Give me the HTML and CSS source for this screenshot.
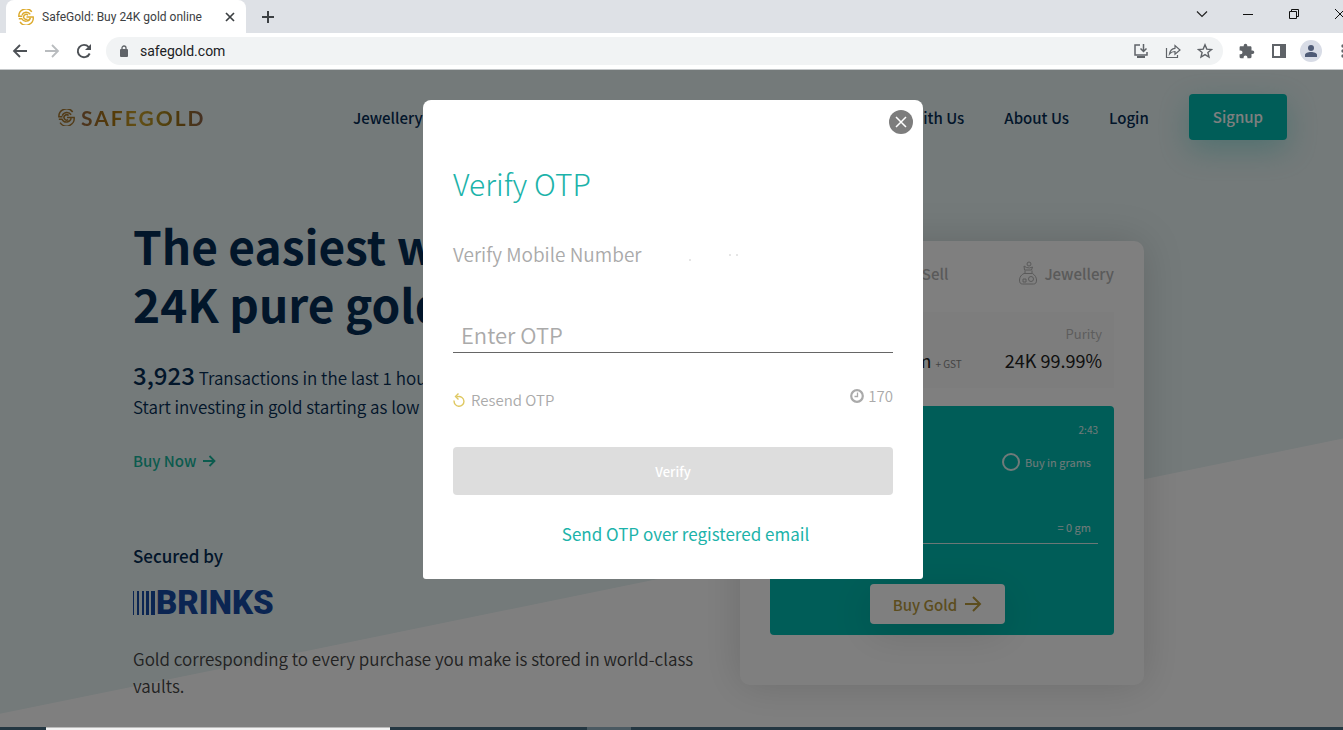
FILE: index.html
```html
<!DOCTYPE html>
<html lang="en">
<head>
  <meta charset="UTF-8">
  <meta name="viewport" content="width=device-width, initial-scale=1.0">
  <title>SafeGold: Buy 24K gold online</title>
  <link rel="stylesheet" href="styles.css">
</head>
<body>
  <!-- shared SafeGold mark -->
  <svg class="defs" width="0" height="0" aria-hidden="true">
    <symbol id="mark" viewBox="0 0 16 16">
      <g fill="none" stroke="currentColor" stroke-width="1.400">
        <path d="M13.800 2.800A7.200 7.200 0 0 0 .8 7.200h3.400"/>
        <path d="M2 12.800A7.200 7.200 0 0 0 15.200 8H8.500"/>
        <path d="M12.300 5.400A4.600 4.600 0 0 0 4 6.400"/>
        <path d="M.8 9.700h3A4.600 4.600 0 0 0 12.400 8.500"/>
        <path d="M10 6.200A2.500 2.500 0 1 0 9.500 10"/>
      </g>
    </symbol>
  </svg>

  <div class="window">
    <div class="tab-strip">
      <div class="tab">
        <svg class="tab-icon" width="16" height="16"><use href="#mark"/></svg>
        <span class="tab-title">SafeGold: Buy 24K gold online</span>
        <button class="icon-btn" aria-label="Close tab">
          <svg width="10" height="10" viewBox="0 0 10 10"><path d="M1 1l8 8M9 1L1 9" stroke="#3c4043" stroke-width="1.700"/></svg>
        </button>
      </div>
      <button class="icon-btn new-tab" aria-label="New tab">
        <svg width="12" height="12" viewBox="0 0 12 12"><path d="M6 0v12M0 6h12" stroke="#3c4043" stroke-width="2"/></svg>
      </button>
      <div class="window-buttons">
        <button class="icon-btn" aria-label="Search tabs">
          <svg width="12" height="12" viewBox="0 0 12 12"><path d="M1 3.500l5 5 5-5" fill="none" stroke="#222" stroke-width="1.200"/></svg>
        </button>
        <button class="icon-btn" aria-label="Minimize">
          <svg width="12" height="12" viewBox="0 0 12 12"><path d="M1 6.500h10" stroke="#111"/></svg>
        </button>
        <button class="icon-btn" aria-label="Restore">
          <svg width="12" height="12" viewBox="0 0 12 12"><path d="M1.500 3.500h7v7h-7zM3.500 3.500v-2h7v7h-2" fill="none" stroke="#111"/></svg>
        </button>
        <button class="icon-btn" aria-label="Close window">
          <svg width="12" height="12" viewBox="0 0 12 12"><path d="M1 1l10 10M11 1L1 11" stroke="#111"/></svg>
        </button>
      </div>
    </div>

    <div class="toolbar">
      <button class="icon-btn" aria-label="Back">
        <svg width="16" height="16" viewBox="0 0 16 16"><path d="M15 8H2M8 2L2 8l6 6" fill="none" stroke="#4d5156" stroke-width="1.800"/></svg>
      </button>
      <button class="icon-btn" aria-label="Forward">
        <svg width="16" height="16" viewBox="0 0 16 16"><path d="M1 8h13M8 2l6 6-6 6" fill="none" stroke="#b9bcbf" stroke-width="1.800"/></svg>
      </button>
      <button class="icon-btn" aria-label="Reload">
        <svg width="16" height="16" viewBox="0 0 16 16"><path d="M13.700 10.500A6.200 6.200 0 1 1 12.700 4" fill="none" stroke="#4d5156" stroke-width="1.900"/><path d="M15 1v6H9z" fill="#4d5156"/></svg>
      </button>
      <div class="address">
        <svg width="10" height="12" viewBox="0 0 10 12"><rect x="1" y="4" width="8" height="8" rx="1" fill="#5f6368"/><path d="M3 5V3a2 2 0 0 1 4 0v2" fill="none" stroke="#5f6368" stroke-width="1.300"/></svg>
        <input type="text" aria-label="Address" value="safegold.com">
        <button class="icon-btn" aria-label="Install">
          <svg width="16" height="16" viewBox="0 0 16 16"><path d="M7 2H2v10h12V9" fill="none" stroke="#5f6368" stroke-width="1.500"/><path d="M10.500 1v7M7.500 5.500l3 3 3-3" fill="none" stroke="#5f6368" stroke-width="1.500"/><path d="M4 13h8v2H4z" fill="#5f6368"/></svg>
        </button>
        <button class="icon-btn" aria-label="Share">
          <svg width="16" height="16" viewBox="0 0 16 16" fill="none" stroke="#5f6368" stroke-width="1.200"><path d="M1.500 5v9.500h11V12"/><path d="M4.500 11C5 7.500 7 5.500 10 5.300V2.500L15 7l-5 4.300V8.500c-2.500 0-4.200.8-5.500 2.500z"/></svg>
        </button>
        <button class="icon-btn" aria-label="Bookmark">
          <svg width="16" height="16" viewBox="0 0 16 16"><path d="M8 1.800l1.800 4.300 4.700.4-3.600 3 1.100 4.600L8 11.600 4 14.100l1.100-4.600-3.600-3 4.700-.4z" fill="none" stroke="#5f6368" stroke-width="1.400"/></svg>
        </button>
      </div>
      <button class="icon-btn" aria-label="Extensions">
        <svg width="16" height="16" viewBox="0 0 16 16"><path d="M13.500 7.500h-1V4.500c0-.7-.6-1.200-1.200-1.200h-3V2.500a1.800 1.800 0 0 0-3.600 0v.8h-3C1 3.300.6 3.800.6 4.500v2.900h1a1.900 1.900 0 0 1 0 3.800h-1v2.900c0 .7.500 1.200 1.100 1.200h2.900v-1a1.900 1.900 0 0 1 3.800 0v1h2.900c.6 0 1.200-.5 1.200-1.200v-3h1a1.800 1.800 0 0 0 0-3.600z" fill="#5f6368"/></svg>
      </button>
      <button class="icon-btn" aria-label="Side panel">
        <svg width="16" height="16" viewBox="0 0 16 16"><path d="M1 1h14v14H1zM3 3v10h6V3z" fill="#5f6368" fill-rule="evenodd"/></svg>
      </button>
      <button class="icon-btn avatar" aria-label="Profile">
        <svg width="12" height="12" viewBox="0 0 12 12" fill="#4f5b76"><circle cx="6" cy="3" r="3"/><path d="M0 12V10c0-2 3-3 6-3s6 1 6 3v2z"/></svg>
      </button>
      <button class="icon-btn" aria-label="Menu">
        <svg width="16" height="16" viewBox="0 0 16 16" fill="#5f6368"><circle cx="8" cy="3" r="1.700"/><circle cx="8" cy="8" r="1.700"/><circle cx="8" cy="13" r="1.700"/></svg>
      </button>
    </div>

    <div class="viewport">
      <header class="site-header">
        <a href="#" class="logo">
          <svg width="17" height="17"><use href="#mark"/></svg>
          <span>SAFEGOLD</span>
        </a>
        <nav class="nav">
          <a href="#">Jewellery</a>
          <a href="#" class="nav-push">Partner With Us</a>
          <a href="#">About Us</a>
          <a href="#">Login</a>
          <a href="#" class="signup">Signup</a>
        </nav>
      </header>

      <main class="hero">
        <section class="intro">
          <h1>The easiest way to buy<br>24K pure gold</h1>
          <p class="stats"><strong>3,923</strong> Transactions in the last 1 hour<br>Start investing in gold starting as low as ₹10</p>
          <a href="#" class="buy-now">Buy Now
            <svg width="14" height="12" viewBox="0 0 14 12"><path d="M1 6h11M7.500 1l5 5-5 5" fill="none" stroke="currentColor" stroke-width="1.800"/></svg>
          </a>
          <h2>Secured by</h2>
          <div class="brinks">
            <svg width="23" height="24" viewBox="0 0 23 24" fill="currentColor"><path d="M0 0h1v24H0zM4 0h2v24H4zM9 0h2v24H9zM13 0h3v24h-3zM18 0h4v24h-4z"/></svg>
            <span>BRINKS</span>
          </div>
          <p class="vault">Gold corresponding to every purchase you make is stored in world-class vaults.</p>
        </section>

        <section class="card">
          <div class="card-tabs">
            <a href="#" class="first">Buy</a>
            <a href="#">Sell</a>
            <a href="#" class="with-icon">
              <svg width="18" height="24" viewBox="0 0 18 24" fill="none" stroke="currentColor"><circle cx="10" cy="3" r="2"/><path d="M7.500 6.500L5 5l.5 4h7l1-3-3 1zM6 9.500v3M13 9.500v3M5 12.500h8.500c2.500 1.500 4 4 4 6.500 0 3-1 4-3 4h-11c-2 0-3-1-3-4 0-3 2-5.500 4.500-6.500z"/><circle cx="12" cy="18" r="2.500"/><path d="M4 18h3v3H4z"/></svg>
              Jewellery
            </a>
          </div>
          <div class="rate">
            <div>
              <div class="label">Live Price</div>
              <div class="value">₹5,210/gm <small>+ GST</small></div>
            </div>
            <div class="purity">
              <div class="label">Purity</div>
              <div class="value">24K 99.99%</div>
            </div>
          </div>
          <form class="buy-box">
            <div class="timer">2:43</div>
            <label class="unit"><input type="radio" name="unit"> Buy in grams</label>
            <div class="amount">= 0 gm</div>
            <button type="button" class="buy-gold">Buy Gold
              <svg width="18" height="16" viewBox="0 0 18 16"><path d="M1 8h15M9 1l7 7-7 7" fill="none" stroke="currentColor" stroke-width="2"/></svg>
            </button>
          </form>
        </section>
      </main>

      <div class="overlay">
        <div class="modal" role="dialog" aria-labelledby="otp-title">
          <button class="modal-close" aria-label="Close">
            <svg width="12" height="12" viewBox="0 0 12 12"><path d="M1 1l10 10M11 1L1 11" stroke="#fff" stroke-width="1.500"/></svg>
          </button>
          <h2 id="otp-title">Verify OTP</h2>
          <p class="mobile">Verify Mobile Number
            <svg width="100" height="8" viewBox="0 0 100 8"><path d="M43 6h2M83 1h2M90 1h2" stroke="#ccc"/></svg>
          </p>
          <input class="otp-input" type="text" placeholder="Enter OTP" aria-label="Enter OTP">
          <div class="resend-row">
            <a href="#" class="resend">
              <svg width="12" height="14" viewBox="0 0 12 14"><path d="M1.200 7.500A4.900 4.900 0 1 0 5 3.600H3.500" fill="none" stroke="#dfc861" stroke-width="1.400"/><path d="M5.500.5L2.500 3.600l3 3" fill="none" stroke="#dfc861" stroke-width="1.400"/></svg>
              Resend OTP
            </a>
            <span class="countdown">
              <svg width="14" height="14" viewBox="0 0 14 14" fill="none" stroke="#aaa"><circle cx="7" cy="7" r="5.800" stroke-width="2.200"/><path d="M7.500 3.500v4H4.500" stroke-width="1.300"/></svg>
              170
            </span>
          </div>
          <button class="verify" disabled>Verify</button>
          <a href="#" class="email-link">Send OTP over registered email</a>
        </div>
      </div>
    </div>

    <div class="taskbar">
      <div class="task-search"></div>
      <div class="task-item"></div>
    </div>
  </div>
</body>
</html>
```

FILE: styles.css
```css
* {
  box-sizing: border-box;
}

body {
  margin: 0;
  overflow: hidden;
  font-family: "Noto Sans CJK SC", "Noto Sans", sans-serif;
  color: #042c55;
}

a {
  color: inherit;
  text-decoration: none;
}

button,
input {
  font-family: inherit;
}

svg {
  flex: none;
}

.defs {
  position: absolute;
}

/* the maximised window runs a little past the right edge of the screen */
.window {
  width: calc(100% + 3px);
  height: 100vh;
  display: flex;
  flex-direction: column;
}

/* browser */
.icon-btn {
  display: flex;
  align-items: center;
  justify-content: center;
  padding: 0;
  border: none;
  background: none;
}

.tab-strip {
  flex: none;
  display: flex;
  align-items: center;
  height: 33px;
  padding-left: 6px;
  background: #dee1e6;
}

.tab {
  display: flex;
  align-items: center;
  align-self: stretch;
  width: 240px;
  padding: 0 11px 0 12px;
  background: #fff;
  border-radius: 8px 8px 0 0;
}

.tab-icon {
  color: #dcaa2c;
}

.tab-title {
  flex: 1;
  margin-left: 8px;
  font: 12px Roboto, sans-serif;
  color: #3c4043;
  white-space: nowrap;
}

.new-tab {
  margin-left: 16px;
}

.window-buttons {
  display: flex;
  gap: 34px;
  margin-left: auto;
  padding: 0 0 6px;
}

.toolbar {
  flex: none;
  display: flex;
  align-items: center;
  gap: 16px;
  height: 37px;
  margin-right: -5px;
  padding-left: 12px;
  background: #fff;
  border-bottom: 1px solid #c4c7c9;
}

.address {
  flex: 1;
  display: flex;
  align-items: center;
  gap: 16px;
  height: 28px;
  margin-left: -2px;
  padding: 0 10px 0 13px;
  border-radius: 14px;
  background: #f1f3f4;
}

.address input {
  flex: 1;
  margin-left: -5px;
  padding: 0;
  border: none;
  background: none;
  font: 14px Roboto, sans-serif;
  color: #202124;
}

.avatar {
  width: 22px;
  height: 22px;
  margin: 0 -3px;
  border-radius: 50%;
  background: #d8dce6;
}

/* site */
.viewport {
  position: relative;
  flex: 1;
  min-height: 0;
  overflow: hidden;
  background: #e8f4f4;
}

.viewport::before {
  content: "";
  position: absolute;
  inset: 0;
  background: #fff;
  clip-path: polygon(0 98%, 100% 56%, 100% 100%, 0 100%);
}

.site-header {
  position: relative;
  display: flex;
  align-items: center;
  padding: 24px 59px 0 58px;
}

.logo {
  display: flex;
  align-items: center;
  gap: 6px;
  width: 147px;
  color: #a5772f;
}

.logo span {
  font: bold 21px Lato, sans-serif;
  letter-spacing: 2px;
  color: transparent;
  background: linear-gradient(90deg, #98683f, #a8740e 25%, #c7a02d 45%, #a8861c 65%, #986c18 80%, #8a6350);
  -webkit-background-clip: text;
  background-clip: text;
}

.nav {
  flex: 1;
  display: flex;
  align-items: center;
  gap: 40px;
  margin-left: 148px;
  font-size: 15px;
  font-weight: 500;
}

.nav-push {
  margin-left: auto;
}

.signup {
  padding: 0 24px;
  line-height: 46px;
  border-radius: 4px;
  background: #00bbb0;
  color: #fff;
  box-shadow: 0 10px 30px rgba(0, 187, 176, 0.3);
}

.hero {
  position: relative;
  display: grid;
  grid-template-columns: 1fr 404px;
  align-items: start;
  gap: 40px;
  padding: 76px 202px 0 133px;
}

.intro h1 {
  margin: 0;
  font-size: 46px;
  line-height: 58px;
  font-weight: 700;
}

.stats {
  margin: 28px 0 0;
  font-size: 17px;
  line-height: 29px;
  font-weight: 350;
}

.stats strong {
  font-size: 24px;
  font-weight: 500;
}

.buy-now {
  display: flex;
  align-items: center;
  gap: 6px;
  margin-top: 28px;
  font-size: 15px;
  line-height: 24px;
  font-weight: 500;
  color: #16b69c;
}

.intro h2 {
  margin: 68px 0 0;
  font-size: 17px;
  line-height: 30px;
  font-weight: 500;
}

.brinks {
  display: flex;
  align-items: center;
  height: 24px;
  margin-top: 20px;
  color: #164aa5;
}

.brinks span {
  font: 900 33px/24px Roboto, sans-serif;
}

.vault {
  margin: 30px 0 0;
  font-size: 17px;
  line-height: 27px;
  font-weight: 350;
  color: #444;
}

.card {
  margin-top: 25px;
  padding: 14px 30px 50px;
  border-radius: 10px;
  background: #fff;
  box-shadow: 0 0 40px rgba(0, 0, 0, 0.15);
}

.card-tabs {
  display: flex;
  align-items: center;
  gap: 71px;
  height: 36px;
  font-size: 15px;
  font-weight: 500;
  color: #b4b4b4;
}

.card-tabs .first {
  margin-right: auto;
}

.with-icon {
  display: flex;
  align-items: center;
  gap: 7px;
}

.rate {
  display: flex;
  justify-content: flex-end;
  gap: 43px;
  height: 76px;
  margin: 21px 0 18px;
  padding: 10px 12px;
  background: #fafafa;
}

.label {
  font-size: 13px;
  line-height: 24px;
  color: #bbb;
}

.value {
  font-size: 18px;
  line-height: 28px;
  color: #222;
}

.value small {
  font-size: 10px;
  color: #888;
}

.purity {
  text-align: right;
}

.buy-box {
  display: flex;
  flex-direction: column;
  padding: 16px 16px 11px;
  border-radius: 4px;
  background: #00bbb0;
  color: #e0f5f3;
}

.timer {
  text-align: right;
  font-size: 10px;
  line-height: 16px;
}

.unit {
  display: flex;
  align-items: center;
  justify-content: flex-end;
  gap: 5px;
  margin-top: 14px;
  padding-right: 7px;
  font-size: 11px;
  line-height: 20px;
}

.unit input {
  appearance: none;
  width: 18px;
  height: 18px;
  margin: 0;
  border: 2px solid #e0f5f3;
  border-radius: 50%;
}

.amount {
  margin-top: 39px;
  padding: 6px 7px 6px 0;
  border-bottom: 1px solid #d8efed;
  text-align: right;
  font-size: 11px;
  line-height: 20px;
}

.buy-gold {
  display: flex;
  align-items: center;
  justify-content: center;
  gap: 7px;
  width: 135px;
  height: 40px;
  margin: 40px 0 0 84px;
  padding: 0;
  border: none;
  border-radius: 4px;
  background: #fff;
  box-shadow: 0 10px 40px rgba(0, 0, 0, 0.12);
  font-size: 15px;
  font-weight: 500;
  color: #b89a3c;
}

/* OTP dialog */
.overlay {
  position: absolute;
  inset: 0;
  padding-top: 30px;
  background: rgba(0, 0, 0, 0.5);
}

.modal {
  position: relative;
  display: flex;
  flex-direction: column;
  width: 500px;
  margin: 0 auto;
  padding: 59px 30px 30px;
  border-radius: 8px 8px 3px 3px;
  background: #fff;
  color: #aaa;
  font-weight: 350;
}

.modal-close {
  position: absolute;
  top: 10px;
  right: 10px;
  display: flex;
  align-items: center;
  justify-content: center;
  width: 24px;
  height: 24px;
  padding: 0;
  border: none;
  border-radius: 50%;
  background: #7d7d7d;
}

.modal h2 {
  margin: 0;
  font-size: 30px;
  line-height: 48px;
  font-weight: 300;
  color: #1cb3aa;
}

.mobile {
  margin: 32px 0 0;
  font-size: 19px;
  line-height: 30px;
}

.otp-input {
  height: 36px;
  margin-top: 48px;
  padding: 0 8px 2px;
  border: none;
  border-bottom: 1px solid #666;
  font-size: 22px;
  font-weight: 350;
}

.otp-input::placeholder {
  color: #aaa;
}

.resend-row {
  display: flex;
  justify-content: space-between;
  align-items: flex-start;
  margin-top: 31px;
  font-size: 15px;
  line-height: 24px;
}

.resend,
.countdown {
  display: flex;
  align-items: center;
  gap: 6px;
}

.resend {
  padding-top: 4px;
}

.countdown {
  gap: 4px;
}

.verify {
  height: 48px;
  margin-top: 35px;
  border: none;
  border-radius: 4px;
  background: #ddd;
  font-size: 13px;
  font-weight: 500;
  color: #fff;
}

.email-link {
  margin-top: 24px;
  padding-left: 25px;
  text-align: center;
  font-size: 17px;
  line-height: 30px;
  font-weight: 400;
  color: #1cb3aa;
}

/* strip of the desktop taskbar */
.taskbar {
  flex: none;
  display: flex;
  height: 3px;
  padding-left: 46px;
  background: #243742;
}

.task-search {
  width: 344px;
  background: #f2f2f2;
  border-top: 1px solid #bbb;
}

.task-item {
  width: 44px;
  margin-left: 197px;
  background: #4b5a62;
}
```
